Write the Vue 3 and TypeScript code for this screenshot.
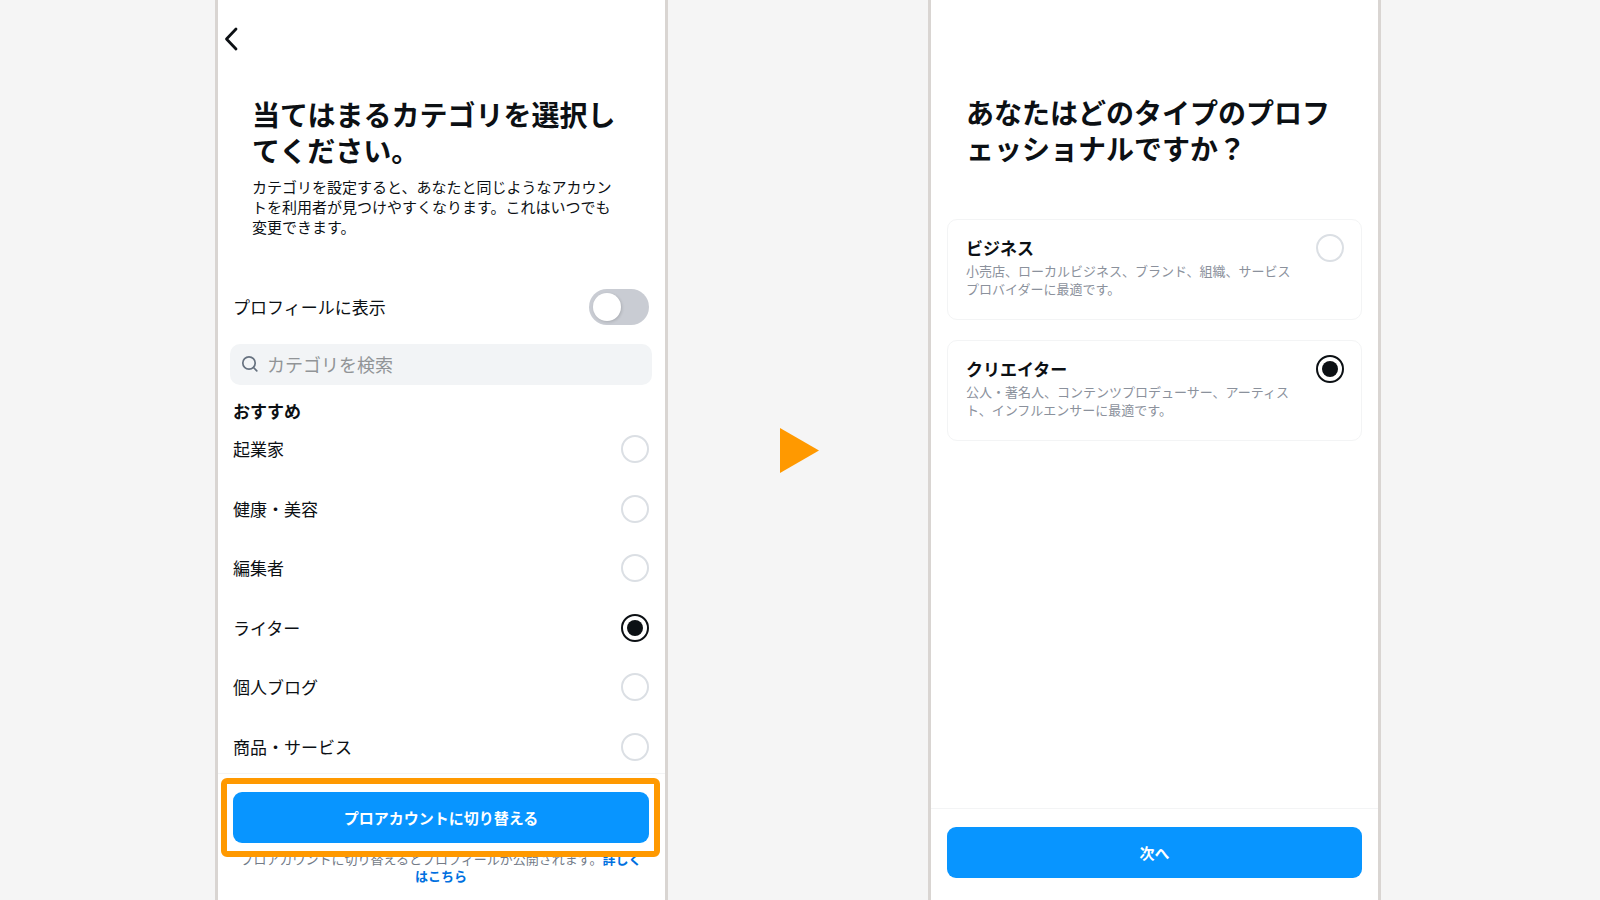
<script setup lang="ts">
import { ref } from 'vue'

interface AccountType {
  id: string
  title: string
  description: string
}

const categories: string[] = [
  '起業家',
  '健康・美容',
  '編集者',
  'ライター',
  '個人ブログ',
  '商品・サービス',
]

const accountTypes: AccountType[] = [
  {
    id: 'business',
    title: 'ビジネス',
    description: '小売店、ローカルビジネス、ブランド、組織、サービスプロバイダーに最適です。',
  },
  {
    id: 'creator',
    title: 'クリエイター',
    description: '公人・著名人、コンテンツプロデューサー、アーティスト、インフルエンサーに最適です。',
  },
]

const category = ref('ライター')
const accountType = ref('creator')
const showOnProfile = ref(false)
const query = ref('')
</script>

<template>
  <main class="stage" lang="ja">
    <section class="phone phone-category">
      <header class="top-bar">
        <button class="back" type="button" aria-label="戻る">
          <svg width="14" height="24" viewBox="0 0 14 24" aria-hidden="true">
            <path d="M12 2 2.500 12 12 22" fill="none" stroke="#0c1014" stroke-width="2.800" stroke-linecap="round" stroke-linejoin="round" />
          </svg>
        </button>
      </header>

      <div class="intro">
        <h1>当てはまるカテゴリを選択してください。</h1>
        <p>カテゴリを設定すると、あなたと同じようなアカウントを利用者が見つけやすくなります。これはいつでも変更できます。</p>
      </div>

      <div class="setting">
        <label for="show-on-profile">プロフィールに表示</label>
        <input id="show-on-profile" v-model="showOnProfile" class="switch" type="checkbox" role="switch" />
      </div>

      <div class="search">
        <svg width="18" height="18" viewBox="0 0 18 18" aria-hidden="true">
          <circle cx="8" cy="8" r="6.200" fill="none" stroke="#66717f" stroke-width="1.700" />
          <path d="m12.500 12.500 3.300 3.300" fill="none" stroke="#66717f" stroke-width="1.700" stroke-linecap="round" />
        </svg>
        <input v-model="query" type="text" placeholder="カテゴリを検索" aria-label="カテゴリを検索" />
      </div>

      <h2>おすすめ</h2>
      <ul class="categories">
        <li v-for="(name, index) in categories" :key="name">
          <label :for="`category-${index}`">{{ name }}</label>
          <input :id="`category-${index}`" v-model="category" class="radio" type="radio" name="category" :value="name" />
        </li>
      </ul>

      <footer class="actions">
        <div class="highlighted">
          <button class="primary" type="button">プロアカウントに切り替える</button>
        </div>
        <p class="note">
          プロアカウントに切り替えるとプロフィールが公開されます。<a href="#">詳しくはこちら</a>
        </p>
      </footer>
    </section>

    <svg class="arrow" width="39" height="45" viewBox="0 0 39 45" aria-hidden="true">
      <path d="M0 0 39 22.500 0 45Z" fill="#ff9900" />
    </svg>

    <section class="phone">
      <div class="intro intro-type">
        <h1>あなたはどのタイプのプロフェッショナルですか？</h1>
      </div>

      <div class="cards">
        <div v-for="type in accountTypes" :key="type.id" class="card">
          <label :for="type.id">
            <strong>{{ type.title }}</strong>
            <span>{{ type.description }}</span>
          </label>
          <input :id="type.id" v-model="accountType" class="radio" type="radio" name="account-type" :value="type.id" />
        </div>
      </div>

      <footer class="actions actions-next">
        <button class="primary" type="button">次へ</button>
      </footer>
    </section>
  </main>
</template>

<style>
body {
  margin: 0;
  background: #f5f5f5;
}
</style>

<style scoped>
* {
  box-sizing: border-box;
}

.stage {
  display: grid;
  grid-template-columns: 453fr 260fr 453fr;
  align-items: stretch;
  min-height: 100vh;
  padding: 0 219px 0 215px;
  color: #0c1014;
  font-family: "Noto Sans CJK JP", sans-serif;
  font-size: 17px;
  line-height: 24px;
  line-break: anywhere;
}

h1,
h2,
p,
ul {
  margin: 0;
  padding: 0;
}

button,
input {
  margin: 0;
  padding: 0;
  border: 0;
  font: inherit;
}

.phone {
  display: flex;
  flex-direction: column;
  min-width: 0;
  padding: 0 16px;
  border: solid #d9d5d2;
  border-width: 0 3px;
  background: #fff;
}

.phone-category {
  padding-left: 15px;
}

.arrow {
  align-self: center;
  justify-self: center;
  margin-left: 3px;
}

.top-bar {
  height: 96px;
  padding-top: 27px;
}

.back {
  display: block;
  height: 24px;
  margin-left: -9px;
  background: none;
  cursor: pointer;
}

.back svg {
  display: block;
}

.intro {
  padding: 0 30px 0 19px;
}

.intro-type {
  padding-top: 94px;
}

h1 {
  font-size: 28px;
  font-weight: 600;
  line-height: 36px;
}

.intro p {
  margin-top: 9px;
  font-size: 15px;
  line-height: 20px;
}

.setting {
  display: flex;
  align-items: center;
  justify-content: space-between;
  margin-top: 52px;
}

.switch {
  width: 60px;
  height: 36px;
  padding: 4px;
  border-radius: 18px;
  background: #c9ccd3;
  appearance: none;
  cursor: pointer;
}

.switch::before {
  content: "";
  display: block;
  width: 28px;
  height: 28px;
  border-radius: 50%;
  background: #fff;
  box-shadow: 1px 1px 3px rgba(0, 0, 0, 0.15);
}

.switch:checked {
  background: #0c1014;
}

.switch:checked::before {
  margin-left: auto;
}

.search {
  display: flex;
  align-items: center;
  gap: 8px;
  height: 41px;
  margin: 19px -3px 0;
  padding: 0 11px 2px;
  border-radius: 10px;
  background: #f2f4f6;
}

.search input {
  flex: 1;
  min-width: 0;
  outline: 0;
  background: none;
  color: inherit;
  font-size: 18px;
}

.search input::placeholder {
  color: #919497;
  opacity: 1;
}

h2 {
  margin-top: 14px;
  font-size: 17px;
  font-weight: 600;
  line-height: 24px;
}

.categories {
  display: flex;
  flex: 1;
  flex-direction: column;
  justify-content: space-between;
  margin: 12px 0;
  list-style: none;
}

.categories li {
  display: flex;
  align-items: center;
  justify-content: space-between;
}

.radio {
  display: grid;
  flex: none;
  place-items: center;
  width: 28px;
  height: 28px;
  border: 2px solid #dbdfe4;
  border-radius: 50%;
  background: #fff;
  appearance: none;
  cursor: pointer;
}

.radio:checked {
  border-color: #0c1014;
}

.radio:checked::before {
  content: "";
  width: 16px;
  height: 16px;
  border-radius: 50%;
  background: #0c1014;
}

.actions {
  margin: 0 -16px;
  padding: 18px 16px 16px;
  border-top: 1px solid #f3f4f5;
}

.phone-category .actions {
  margin-left: -15px;
  padding-left: 15px;
}

.highlighted {
  position: relative;
}

/* Callout frame drawn over the button and the note below it */
.highlighted::after {
  content: "";
  position: absolute;
  inset: -14px -11px -14px -12px;
  border: 6px solid #ff9900;
  border-radius: 6px;
  pointer-events: none;
}

.primary {
  display: block;
  width: 100%;
  height: 51px;
  border-radius: 9px;
  background: #0895ff;
  color: #fff;
  font-size: 15px;
  font-weight: 600;
  cursor: pointer;
}

.note {
  margin-top: 7px;
  padding: 0 4px;
  color: #737b87;
  font-size: 13px;
  line-height: 17px;
  text-align: center;
}

.note a {
  color: #0070e0;
  font-weight: 600;
  text-decoration: none;
}

.cards {
  display: grid;
  gap: 20px;
  margin-top: 53px;
}

.card {
  display: flex;
  gap: 16px;
  min-height: 101px;
  padding: 14px 17px 14px 18px;
  border: 1px solid #f3f4f5;
  border-radius: 10px;
}

.card label {
  flex: 1;
}

.card strong,
.card span {
  display: block;
}

.card strong {
  margin: 2px 0;
  font-weight: 600;
}

.card span {
  color: #8b919c;
  font-size: 13px;
  line-height: 18px;
}

.actions-next {
  margin-top: auto;
  padding-bottom: 22px;
}
</style>
